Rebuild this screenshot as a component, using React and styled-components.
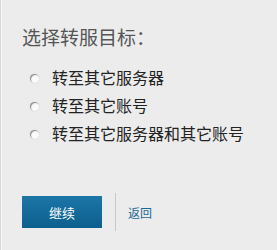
import React, { useState } from "react";
import styled, { createGlobalStyle } from "styled-components";

const GlobalStyle = createGlobalStyle`
  body {
    margin: 0;
    background: #ececec;
    font-family: "Noto Sans CJK SC", "Liberation Sans", sans-serif;
  }
`;

const Panel = styled.div`
  width: 277px;
  height: 250px;
  box-sizing: border-box;
  background: #ececec;
  border-left: 1px solid #d6d6d6;
  box-shadow: inset 1px 0 0 #f8f8f8;
  padding: 24px 0 0 21px;
  display: flex;
  flex-direction: column;
`;

const Title = styled.h2`
  margin: 0;
  font-size: 19px;
  font-weight: normal;
  line-height: 26px;
  color: #555;
`;

const Options = styled.div`
  display: flex;
  flex-direction: column;
  margin-top: 13px;
`;

const Option = styled.label`
  display: flex;
  align-items: center;
  height: 28px;
  font-size: 16px;
  color: #222;
  cursor: pointer;
`;

const Radio = styled.span`
  width: 9px;
  height: 9px;
  margin: 3px 13px 0 8px;
  border-radius: 50%;
  background: ${(p) => (p.checked ? "#555" : "#fafafa")};
  box-shadow: inset 1px 1px 1px #8a8a8a, 0 0 0 1px #e4e4e4;
`;

const Actions = styled.div`
  display: flex;
  align-items: center;
  margin-top: 46px;
`;

const Button = styled.button`
  width: 80px;
  height: 32px;
  border: none;
  background: linear-gradient(#1b76a7, #0c5f8d);
  color: #fff;
  font-family: inherit;
  font-size: 13px;
  cursor: pointer;
`;

const Divider = styled.span`
  width: 1px;
  height: 38px;
  background: #c8c8c8;
  margin: 0 12px 0 13px;
`;

const Back = styled.a`
  font-size: 12px;
  color: #1a6895;
  text-decoration: none;
  cursor: pointer;
`;

const options = ["转至其它服务器", "转至其它账号", "转至其它服务器和其它账号"];

const App = () => {
  const [selected, setSelected] = useState(null);
  return (
    <>
      <GlobalStyle />
      <Panel>
        <Title>选择转服目标：</Title>
        <Options>
          {options.map((text, i) => (
            <Option key={i} onClick={() => setSelected(i)}>
              <Radio checked={selected === i} />
              {text}
            </Option>
          ))}
        </Options>
        <Actions>
          <Button>继续</Button>
          <Divider />
          <Back>返回</Back>
        </Actions>
      </Panel>
    </>
  );
};

export default App;
